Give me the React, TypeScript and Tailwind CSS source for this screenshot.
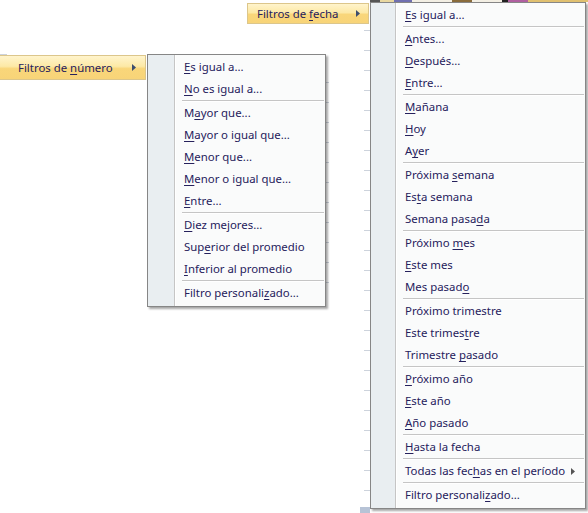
import React from "react";

type Entry = string | null;

const leftItems: Entry[] = [
  "&Es igual a...",
  "&No es igual a...",
  null,
  "M&ayor que...",
  "&Mayor o igual que...",
  "&Menor que...",
  "&Menor o igual que...",
  "&Entre...",
  null,
  "&Diez mejores...",
  "Sup&erior del promedio",
  "&Inferior al promedio",
  null,
  "Filtro personali&zado...",
];

const rightItems: Entry[] = [
  "&Es igual a...",
  null,
  "&Antes...",
  "&Después...",
  "&Entre...",
  null,
  "&Mañana",
  "&Hoy",
  "A&yer",
  null,
  "Próxima &semana",
  "Es&ta semana",
  "Semana pasa&da",
  null,
  "Próximo &mes",
  "&Este mes",
  "Mes pasad&o",
  null,
  "Próximo trimestre",
  "Este trimes&tre",
  "Trimestre &pasado",
  null,
  "&Próximo año",
  "&Este año",
  "&Año pasado",
  null,
  "&Hasta la fecha",
  null,
  "Todas las fec&has en el período>",
  null,
  "Filtro personali&zado...",
];

function Label({ text }: { text: string }) {
  const i = text.indexOf("&");
  if (i < 0) return <>{text}</>;
  return (
    <>
      {text.slice(0, i)}
      <span className="underline decoration-1 underline-offset-[2px]">{text[i + 1]}</span>
      {text.slice(i + 2)}
    </>
  );
}

function Arrow({ color }: { color: string }) {
  return (
    <svg width="4" height="7" viewBox="0 0 4 7" className="shrink-0">
      <path d="M0 0 L4 3.5 L0 7 Z" fill={color} />
    </svg>
  );
}

function Menu({
  items,
  gutter,
  className,
}: {
  items: Entry[];
  gutter: string;
  className: string;
}) {
  return (
    <div
      className={
        "absolute flex border border-[#868686] bg-[#fafbfb] shadow-[2px_2px_2px_rgba(0,0,0,0.35)] " +
        className
      }
    >
      <div className={"shrink-0 bg-[#e9eef1] border-r border-[#c5c5c5] " + gutter} />
      <div className="flex-1 flex flex-col pt-[1px] pb-[2px] border-l border-white">
        {items.map((it, idx) =>
          it === null ? (
            <div key={idx} className="ml-[6px] mr-[1px] h-[2px] flex flex-col">
              <div className="h-[1px] bg-[#c5c5c5]" />
              <div className="h-[1px] bg-white" />
            </div>
          ) : (
            <div
              key={idx}
              className="h-[22px] flex items-center pl-[8px] pr-[10px] text-[11.4px] text-[#26215c] whitespace-nowrap"
            >
              <span className="flex-1">
                <Label text={it.replace(">", "")} />
              </span>
              {it.endsWith(">") && <Arrow color="#555555" />}
            </div>
          )
        )}
      </div>
    </div>
  );
}

const ticks1 = Array.from({ length: 24 }, (_, i) => 30 + i * 20);

export default function App() {
  return (
    <div
      className="relative w-[588px] h-[513px] overflow-hidden bg-white"
      style={{ fontFamily: '"Noto Sans", "Open Sans", sans-serif' }}
    >
      {/* faint grid fragments */}
      {ticks1.map((y) => (
        <div key={"a" + y} className="absolute left-[364px] w-[6px] h-[1px] bg-[#cdd3dc]" style={{ top: y }} />
      ))}
      {[82, 102, 122, 142, 162, 182, 202, 222, 242, 262, 282].map((y) => (
        <div key={"b" + y} className="absolute left-[326px] w-[3px] h-[1px] bg-[#cdd3dc]" style={{ top: y }} />
      ))}
      <div className="absolute left-0 top-[54px] w-[7px] h-[1px] bg-[#cdd3dc]" />
      <div className="absolute left-[360px] top-[507px] w-[10px] h-[6px] bg-[#b7c3d6]" />
      {/* content fragment above right menu */}
      <div className="absolute left-[370px] top-0 w-[218px] h-[2px] flex">
        <div className="w-[10px] bg-[#555]" />
        <div className="w-[14px] bg-[#e8d7a0]" />
        <div className="w-[18px] bg-[#7070b0]" />
        <div className="w-[40px] bg-[#f3efe4]" />
        <div className="w-[20px] bg-[#8a6c3c]" />
        <div className="w-[30px] bg-[#f3efe4]" />
        <div className="w-[6px] bg-[#222]" />
        <div className="w-[20px] bg-[#b060a0]" />
        <div className="flex-1 bg-[#e0c070]" />
      </div>

      {/* highlighted parent item: Filtros de número */}
      <div className="absolute left-[-1px] top-[55px] w-[147px] h-[25px] border border-[#dcc68b] bg-[linear-gradient(to_bottom,#fff4cc_0%,#fde9a6_45%,#f9d67a_55%,#f8d478_100%)] flex items-center pl-[18px] pr-[9px] text-[11.4px] text-[#26215c]">
        <span className="flex-1 whitespace-nowrap">
          <Label text="Filtros de &número" />
        </span>
        <Arrow color="#3c4d6e" />
      </div>

      {/* highlighted parent item: Filtros de fecha */}
      <div className="absolute left-[247px] top-[3px] w-[122px] h-[21px] border border-[#dcc68b] bg-[linear-gradient(to_bottom,#fff4cc_0%,#fde9a6_45%,#f9d67a_55%,#f8d478_100%)] flex items-center pl-[9px] pr-[8px] text-[11.4px] text-[#26215c]">
        <span className="flex-1 whitespace-nowrap">
          <Label text="Filtros de &fecha" />
        </span>
        <Arrow color="#3c4d6e" />
      </div>

      <Menu items={leftItems} gutter="w-[27px]" className="left-[147px] top-[54px] w-[179px]" />
      <Menu items={rightItems} gutter="w-[25px]" className="left-[370px] top-[2px] w-[216px]" />
    </div>
  );
}
